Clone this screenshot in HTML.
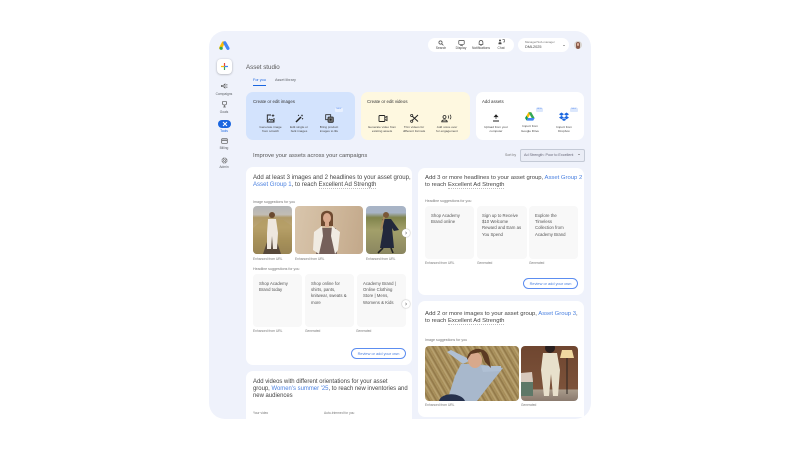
<!DOCTYPE html>
<html>
<head>
<meta charset="utf-8">
<style>
html,body{margin:0;padding:0;width:800px;height:450px;background:#fff;overflow:hidden;font-family:"Liberation Sans",sans-serif;color:#3c4043}
#app{position:absolute;left:209px;top:31px;width:382px;height:388px;background:#eff2fb;border-radius:16px;overflow:hidden;border:0}
.a{position:absolute;white-space:nowrap}
.w{position:absolute;background:#fff;border-radius:7px}
.nav{position:absolute;width:30px;text-align:center;font-size:3.3px;color:#5f6368;white-space:nowrap}
.c{position:absolute;text-align:center;font-size:3.1px;line-height:4.7px;color:#444;white-space:nowrap}
.h{position:absolute;font-size:5.92px;line-height:7.35px;color:#444;white-space:nowrap}
.h b{font-weight:normal;color:#4a80e0}
.h u{text-decoration:none;border-bottom:.4px dotted #bbb}
.l{position:absolute;font-size:3.25px;color:#777;white-space:nowrap}
.s{position:absolute;font-size:3.6px;color:#777;white-space:nowrap}
.t{position:absolute;background:#f8f8f8;border-radius:4px;font-size:4.3px;line-height:6.4px;color:#555;padding:6.5px 0 0 6px;box-sizing:border-box;white-space:nowrap}
.btn{position:absolute;box-sizing:border-box;border:.7px solid #5c8df0;border-radius:5.5px;background:#fff;color:#4a80e0;font-size:3.9px;text-align:center;white-space:nowrap}
.new{position:absolute;width:7.5px;height:3.5px;background:#dbe7fc;border-radius:1px;color:#5b8def;font-size:2.2px;line-height:3.5px;text-align:center}
.ph{position:absolute;border-radius:4px;overflow:hidden}
svg{position:absolute;display:block}
.nx{position:absolute;width:8px;height:8px;border-radius:50%;background:#fff;box-shadow:0 0 1.5px #999}
</style>
</head>
<body>
<div id="app"></div>

<!-- logo -->
<svg style="left:218.500px;top:40.500px" width="12" height="10" viewBox="0 0 12 10">
<path d="M4.300 1.800 L1.600 7" stroke="#fbbc04" stroke-width="3" stroke-linecap="round"/>
<path d="M5.800 1.800 L8.900 7.300" stroke="#4285f4" stroke-width="3.200" stroke-linecap="round"/>
<circle cx="2.200" cy="7.300" r="1.600" fill="#34a853"/>
</svg>

<!-- top bar -->
<div class="w" style="left:428px;top:37.500px;width:86px;height:14.500px;border-radius:7.500px"></div>
<div class="w" style="left:518px;top:37.500px;width:51px;height:14.500px;border-radius:7.500px"></div>
<svg style="left:438px;top:39.500px" width="6" height="6" viewBox="0 0 6 6"><circle cx="2.500" cy="2.500" r="1.600" fill="none" stroke="#444" stroke-width=".7"/><path d="M3.700 3.700 5.400 5.400" stroke="#444" stroke-width=".7"/></svg>
<svg style="left:458px;top:39.500px" width="7" height="6" viewBox="0 0 7 6"><rect x=".8" y=".5" width="5.400" height="3.800" rx=".5" fill="none" stroke="#444" stroke-width=".7"/><path d="M2.200 5.400H4.800" stroke="#444" stroke-width=".7"/></svg>
<svg style="left:478px;top:39.500px" width="6" height="6" viewBox="0 0 6 6"><path d="M1.100 4.400V2.600C1.100 1 2 .5 3 .5S4.900 1 4.900 2.600V4.400Z" fill="none" stroke="#444" stroke-width=".7"/><path d="M2.400 5.500H3.600" stroke="#444" stroke-width=".7"/></svg>
<svg style="left:498px;top:39px" width="7" height="6" viewBox="0 0 7 6"><circle cx="2" cy="1.500" r="1" fill="#444"/><path d="M.5 5.300V4C.5 3 3.500 3 3.500 4V5.300Z" fill="#444"/><path d="M4.500 .7H6.500V3H5" fill="none" stroke="#444" stroke-width=".6"/></svg>
<div class="nav" style="left:426px;top:45.800px;color:#444">Search</div>
<div class="nav" style="left:446px;top:45.800px;color:#444">Display</div>
<div class="nav" style="left:466px;top:45.800px;color:#444">Notifications</div>
<div class="nav" style="left:486px;top:45.800px;color:#444">Chat</div>
<div class="a" style="left:525px;top:40.300px;font-size:2.900px;color:#777">Manager/Sub-manager</div>
<div class="a" style="left:525px;top:44.700px;font-size:3.800px;color:#444">DML2025</div>
<div class="a" style="left:563px;top:44.700px;width:0;height:0;border-left:1.300px solid transparent;border-right:1.300px solid transparent;border-top:1.500px solid #555"></div>
<div class="a" style="left:574px;top:41px;width:8px;height:8px;border-radius:50%;overflow:hidden;background:#d8d4d0"><div style="position:absolute;left:2px;top:1px;width:4px;height:7px;background:#8a5a4a;border-radius:2px"></div><div style="position:absolute;left:3px;top:2px;width:2px;height:3px;background:#e2b7a0;border-radius:1px"></div></div>

<!-- sidebar -->
<div class="w" style="left:217px;top:59px;width:15px;height:15px;border-radius:4px;box-shadow:0 .5px 2px rgba(0,0,0,.3)"></div>
<svg style="left:221px;top:63px" width="7" height="7" viewBox="0 0 7 7"><path d="M3.500 .3V3.200" stroke="#ea4335" stroke-width="1.200" stroke-linecap="round"/><path d="M3.500 3.800V6.700" stroke="#34a853" stroke-width="1.200" stroke-linecap="round"/><path d="M.3 3.500H3.200" stroke="#fbbc04" stroke-width="1.200" stroke-linecap="round"/><path d="M3.800 3.500H6.700" stroke="#4285f4" stroke-width="1.200" stroke-linecap="round"/></svg>

<svg style="left:221px;top:83px" width="7" height="6" viewBox="0 0 7 6"><path d="M.5 2.300H2.500L4 1V5L2.500 3.700H.5Z" fill="none" stroke="#555" stroke-width=".7"/><path d="M5 1.500H6.500M5 3H6.500M5 4.500H6.500" stroke="#555" stroke-width=".6"/></svg>
<div class="nav" style="left:209px;top:91.500px">Campaigns</div>
<svg style="left:221px;top:101px" width="7" height="7" viewBox="0 0 7 7"><path d="M1.500 .7H5.500V2.500C5.500 3.500 4.500 4 3.500 4S1.500 3.500 1.500 2.500ZM3.500 4V5.800M2.200 6H4.800" fill="none" stroke="#555" stroke-width=".7"/></svg>
<div class="nav" style="left:209px;top:110px">Goals</div>
<div class="a" style="left:218px;top:120px;width:13px;height:7.500px;border-radius:4px;background:#1a66e0"></div>
<svg style="left:221.500px;top:121px" width="6" height="6" viewBox="0 0 6 6"><path d="M1 1 5 5M5 1 1 5" stroke="#fff" stroke-width="1"/></svg>
<div class="nav" style="left:209px;top:128.500px;color:#1a66e0">Tools</div>
<svg style="left:221px;top:138px" width="7" height="6" viewBox="0 0 7 6"><rect x=".7" y=".7" width="5.600" height="4.600" rx=".4" fill="none" stroke="#555" stroke-width=".7"/><path d="M.7 2.200H6.300" stroke="#555" stroke-width="1"/></svg>
<div class="nav" style="left:209px;top:146px">Billing</div>
<svg style="left:221px;top:157px" width="7" height="7" viewBox="0 0 7 7"><circle cx="3.500" cy="3.500" r="2.500" fill="none" stroke="#555" stroke-width=".8" stroke-dasharray="1.400 .5"/><circle cx="3.500" cy="3.500" r="1" fill="none" stroke="#555" stroke-width=".6"/></svg>
<div class="nav" style="left:209px;top:165px">Admin</div>

<!-- header -->
<div class="a" style="left:246px;top:64px;font-size:6.200px;color:#555">Asset studio</div>
<div class="a" style="left:253px;top:77.800px;font-size:3.800px;color:#1a66e0">For you</div>
<div class="a" style="left:275px;top:77.800px;font-size:3.800px;color:#5f6368">Asset library</div>
<div class="a" style="left:253px;top:85px;width:12.500px;height:.8px;background:#1a66e0"></div>

<!-- feature cards -->
<div class="w" style="left:246px;top:92px;width:109px;height:48px;background:#d3e3fd"></div>
<div class="w" style="left:361px;top:92px;width:109px;height:48px;background:#fef8e0"></div>
<div class="w" style="left:476px;top:92px;width:108px;height:48px"></div>
<div class="a" style="left:253px;top:98.800px;font-size:4.400px;color:#333">Create or edit images</div>
<div class="a" style="left:367px;top:98.800px;font-size:4.400px;color:#333">Create or edit videos</div>
<div class="a" style="left:482px;top:98.800px;font-size:4.400px;color:#333">Add assets</div>

<svg style="left:265.500px;top:113.500px" width="9" height="9" viewBox="0 0 9 9"><path d="M5 1H1.300V8H8V4" fill="none" stroke="#222" stroke-width=".9"/><path d="M1.500 7 3.500 5 5 6.300 6 5.300 7.800 7" fill="none" stroke="#222" stroke-width=".8"/><path d="M7 .3V3M5.700 1.600H8.300" stroke="#222" stroke-width=".7"/></svg>
<div class="c" style="left:252.500px;top:124.500px;width:36px">Generate image<br>from scratch</div>
<svg style="left:294.500px;top:113.500px" width="9" height="9" viewBox="0 0 9 9"><path d="M1 8 6 3" stroke="#222" stroke-width="1.500"/><path d="M7 .5V2.500M6 1.500H8M7.500 4V5.500M6.800 4.700H8.200M3.500 .8V2M2.900 1.400H4.100" stroke="#222" stroke-width=".6"/></svg>
<div class="c" style="left:281px;top:124.500px;width:36px">Edit single or<br>bulk images</div>
<svg style="left:324.500px;top:113.500px" width="9" height="9" viewBox="0 0 9 9"><rect x=".7" y=".7" width="5" height="5" fill="none" stroke="#222" stroke-width=".8"/><rect x="3" y="3" width="5.300" height="5.300" rx=".8" fill="#777" stroke="#222" stroke-width=".8"/><circle cx="5.600" cy="5.600" r="1" fill="#222"/></svg>
<div class="new" style="left:335px;top:108.300px;background:#e8f0fe">NEW</div>
<div class="c" style="left:311px;top:124.500px;width:36px">Bring product<br>images to life</div>

<svg style="left:378px;top:113.500px" width="10" height="9" viewBox="0 0 10 9"><rect x="1" y="1.500" width="5.800" height="6" rx=".8" fill="none" stroke="#222" stroke-width=".9"/><path d="M6.800 3.500 9 2.500V6.500L6.800 5.500" fill="none" stroke="#222" stroke-width=".9"/></svg>
<div class="c" style="left:362px;top:124.500px;width:40px">Generate video from<br>existing assets</div>
<svg style="left:409.500px;top:113.500px" width="9" height="9" viewBox="0 0 9 9"><path d="M1 1 8 7.500M8 1 1 7.500" stroke="#222" stroke-width="1"/><circle cx="1.700" cy="1.500" r="1.100" fill="#fef8e0" stroke="#222" stroke-width=".8"/><circle cx="1.700" cy="7.300" r="1.100" fill="#fef8e0" stroke="#222" stroke-width=".8"/></svg>
<div class="c" style="left:394px;top:124.500px;width:40px">Trim videos for<br>different formats</div>
<svg style="left:441px;top:113.500px" width="11" height="9" viewBox="0 0 11 9"><circle cx="3.500" cy="3" r="1.500" fill="none" stroke="#222" stroke-width=".8"/><path d="M.7 7.800C.7 5.300 6.300 5.300 6.300 7.800Z" fill="none" stroke="#222" stroke-width=".8"/><path d="M7 1.500C8 2.500 8 3.500 7 4.500M9 .7C10.300 2 10.300 4 9 5.300" fill="none" stroke="#222" stroke-width=".7"/></svg>
<div class="c" style="left:427px;top:124.500px;width:40px">Add voice over<br>for engagement</div>

<svg style="left:492px;top:114px" width="8" height="8" viewBox="0 0 8 8"><path d="M4 5V1.200M2.200 2.800 4 .8 5.800 2.800Z" fill="#222" stroke="#222" stroke-width=".7"/><path d="M1 7H7" stroke="#222" stroke-width="1"/></svg>
<div class="c" style="left:480px;top:124.500px;width:32px">Upload from your<br>computer</div>
<svg style="left:525px;top:111.500px" width="10" height="9" viewBox="0 0 10 9"><path d="M3.500.3H6.300L3 6 1.500 3.500Z" fill="#fbbc04"/><path d="M6.300.3 9.700 6.200H6.800L3.500.3Z" fill="#34a853"/><path d="M3 6H9.700L8.200 8.600H1.600Z" fill="#4285f4"/><path d="M1.500 3.500 3 6 1.600 8.600 0 6Z" fill="#0f9d58"/></svg>
<div class="new" style="left:535.500px;top:108.300px">NEW</div>
<div class="c" style="left:514px;top:124px;width:32px">Import from<br>Google Drive</div>
<svg style="left:559px;top:111.500px" width="10" height="9" viewBox="0 0 10 9"><path d="M2.500.5 5 2.200 2.500 3.900 0 2.200ZM7.500.5 10 2.200 7.500 3.900 5 2.200ZM2.500 3.900 5 5.600 2.500 7.200 0 5.600ZM7.500 3.900 10 5.600 7.500 7.200 5 5.600ZM2.700 7.700 5 6.200 7.300 7.700 5 9Z" fill="#1a66e0"/></svg>
<div class="new" style="left:570px;top:108.300px">NEW</div>
<div class="c" style="left:548px;top:124.500px;width:32px">Import from<br>Dropbox</div>

<!-- sort row -->
<div class="a" style="left:253px;top:152.500px;font-size:5.850px;color:#555">Improve your assets across your campaigns</div>
<div class="a" style="left:505px;top:152.500px;font-size:3.500px;color:#777">Sort by</div>
<div class="a" style="left:519.500px;top:148.500px;width:65px;height:13px;box-sizing:border-box;border:.7px solid #c4cad6;border-radius:2px;background:#eaedf6"></div>
<div class="a" style="left:524px;top:152.500px;font-size:3.700px;color:#667">Ad Strength: Poor to Excellent</div>
<div class="a" style="left:577.500px;top:154.300px;width:0;height:0;border-left:1.300px solid transparent;border-right:1.300px solid transparent;border-top:1.500px solid #555"></div>

<!-- left card 1 -->
<div class="w" style="left:246px;top:167px;width:166px;height:198px"></div>
<div class="h" style="left:253px;top:175px;font-size:6.050px">Add at least 3 images and 2 headlines to your asset group,<br><b>Asset Group 1</b>, to reach <u>Excellent Ad Strength</u></div>
<div class="s" style="left:253px;top:199.700px">Image suggestions for you</div>

<div class="ph" style="left:253px;top:206px;width:39px;height:48px;background:linear-gradient(#b3b5b6 0,#c2bdb5 18%,#b09a68 24%,#bca676 45%,#8c7748 70%,#5b4c34 100%)">
<svg style="left:0;top:0" width="39" height="48" viewBox="0 0 39 48"><path d="M0 22 10 14H30L39 20V48H0Z" fill="#b39c63" opacity=".7"/><path d="M10 48 16 30H22L28 48Z" fill="#57483a"/><circle cx="19" cy="9" r="3" fill="#6a4a30"/><path d="M15 13H23L25 27 24 43H20L19 30 18 43H14L14 27Z" fill="#eee7de"/></svg></div>
<div class="ph" style="left:295px;top:206px;width:68px;height:48px;background:linear-gradient(100deg,#d8c5ac,#cdb598 60%,#c2a88a)">
<svg style="left:0;top:0" width="68" height="48" viewBox="0 0 68 48"><path d="M26 10C26 3 38 3 38 10L38 20H26Z" fill="#6f4a30"/><ellipse cx="32" cy="12" rx="4" ry="5" fill="#d9a88c"/><rect x="30" y="16" width="4" height="5" fill="#d9a88c"/><path d="M24 22 41 22 42 48H21Z" fill="#75605a"/><path d="M27 20 19 26 18 44 24 48 28 30ZM37 20 45 26 43 44 40 48 36 30Z" fill="#f0ebe2"/></svg></div>
<div class="ph" style="left:366px;top:206px;width:40px;height:48px;background:linear-gradient(#a8b4c6 0,#a8b4c6 14%,#80844c 24%,#a3a06a 50%,#8a8660 100%)">
<svg style="left:0;top:0" width="40" height="48" viewBox="0 0 40 48"><circle cx="20" cy="9" r="3" fill="#7a5838"/><path d="M16 13H25L33 24 28 25 26 22 28 42 14 42 17 24Z" fill="#22283c"/><path d="M17 42 12 47M25 42 27 47" stroke="#222" stroke-width="1.600"/><path d="M18 11 15 24" stroke="#a88a5c" stroke-width="2"/></svg></div>
<div class="nx" style="left:401.500px;top:229px"></div>
<svg style="left:403.500px;top:231px" width="4" height="4" viewBox="0 0 4 4"><path d="M1.300.8 2.800 2 1.300 3.200" fill="none" stroke="#444" stroke-width=".5"/></svg>
<div class="l" style="left:253px;top:256.800px">Enhanced from URL</div>
<div class="l" style="left:295px;top:256.800px">Enhanced from URL</div>
<div class="l" style="left:366px;top:256.800px">Enhanced from URL</div>

<div class="s" style="left:253px;top:267.200px">Headline suggestions for you</div>
<div class="t" style="left:253px;top:274px;width:49px;height:53px">Shop Academy<br>Brand today</div>
<div class="t" style="left:305px;top:274px;width:49px;height:53px">Shop online for<br>shirts, pants,<br>knitwear, sweats &amp;<br>more</div>
<div class="t" style="left:357px;top:274px;width:49px;height:53px">Academy Brand |<br>Online Clothing<br>Store | Mens,<br>Womens &amp; Kids</div>
<div class="nx" style="left:401.500px;top:300px"></div>
<svg style="left:403.500px;top:302px" width="4" height="4" viewBox="0 0 4 4"><path d="M1.300.8 2.800 2 1.300 3.200" fill="none" stroke="#444" stroke-width=".5"/></svg>
<div class="l" style="left:253px;top:328.700px">Enhanced from URL</div>
<div class="l" style="left:305px;top:328.700px">Generated</div>
<div class="l" style="left:356px;top:328.700px">Generated</div>
<div class="btn" style="left:351px;top:348.300px;width:55px;height:10.500px;line-height:9.500px">Review or add your own</div>

<!-- left card 2 -->
<div class="w" style="left:246px;top:371px;width:166px;height:48px;border-radius:7px 7px 0 0"></div>
<div class="h" style="left:253px;top:378.500px;font-size:5.950px">Add videos with different orientations for your asset<br>group, <b>Women's summer '25</b>, to reach new inventories and<br>new audiences</div>
<div class="l" style="left:253px;top:410.500px">Your video</div>
<div class="l" style="left:324px;top:410.500px">Auto-trimmed for you</div>

<!-- right card 1 -->
<div class="w" style="left:418px;top:168px;width:166px;height:127px"></div>
<div class="h" style="left:425px;top:175px">Add 3 or more headlines to your asset group, <b>Asset Group 2</b><br>to reach <u>Excellent Ad Strength</u></div>
<div class="s" style="left:425px;top:199.200px">Headline suggestions for you</div>
<div class="t" style="left:425px;top:206px;width:49px;height:53px">Shop Academy<br>Brand online</div>
<div class="t" style="left:477px;top:206px;width:50px;height:53px;padding-left:5px">Sign up to Receive<br>$10 Welcome<br>Reward and Earn as<br>You Spend</div>
<div class="t" style="left:529px;top:206px;width:49px;height:53px">Explore the<br>Timeless<br>Collection from<br>Academy Brand</div>
<div class="l" style="left:425px;top:260.500px">Enhanced from URL</div>
<div class="l" style="left:477px;top:260.500px">Generated</div>
<div class="l" style="left:529px;top:260.500px">Generated</div>
<div class="btn" style="left:523px;top:278px;width:55px;height:10.700px;line-height:9.700px">Review or add your own</div>

<!-- right card 2 -->
<div class="w" style="left:418px;top:301px;width:166px;height:116px;border-radius:7px 7px 0 7px"></div>
<div class="h" style="left:425px;top:310.500px">Add 2 or more images to your asset group, <b>Asset Group 3</b>,<br>to reach <u>Excellent Ad Strength</u></div>
<div class="s" style="left:425px;top:337.800px">Image suggestions for you</div>
<div class="ph" style="left:425px;top:346px;width:93.500px;height:55px;background:repeating-linear-gradient(60deg,#a08550 0,#bca674 2px,#8f7545 4px,#b09a66 6px)">
<svg style="left:0;top:0" width="94" height="55" viewBox="0 0 94 55"><path d="M22 55 30 30 36 18H52L66 20 78 22 62 42 52 55Z" fill="#a8b8cc"/><path d="M38 18 22 6 26 4 46 14ZM56 20 76 20 76 25 58 26Z" fill="#b0c0d4"/><ellipse cx="50" cy="14" rx="7" ry="8" fill="#d8a98c"/><path d="M42 14C42 0 62 -1 64 12L66 22 60 16 56 6 46 8Z" fill="#5c3a22"/><path d="M14 55C16 46 36 46 40 55Z" fill="#25304c"/></svg></div>
<div class="ph" style="left:521px;top:346px;width:57px;height:55px;background:linear-gradient(#6f4630,#7c523a 78%,#a89a8a 80%,#8a7a6e)">
<svg style="left:0;top:0" width="57" height="55" viewBox="0 0 57 55"><circle cx="29" cy="2" r="5" fill="#2a2020"/><path d="M22 7H36L39 24 37 50H32L30 28 28 50H23L20 24Z" fill="#e8e0cc"/><path d="M0 30 12 32 12 50H0Z" fill="#5e7868"/><path d="M0 27 11 26 12 36H0Z" fill="#d8c8bc"/><path d="M41 4H51L53 12H39Z" fill="#f0d8a0"/><path d="M46 12V48" stroke="#2a2420" stroke-width="1"/></svg></div>
<div class="l" style="left:425px;top:403px">Enhanced from URL</div>
<div class="l" style="left:521px;top:403px">Generated</div>
</body>
</html>
